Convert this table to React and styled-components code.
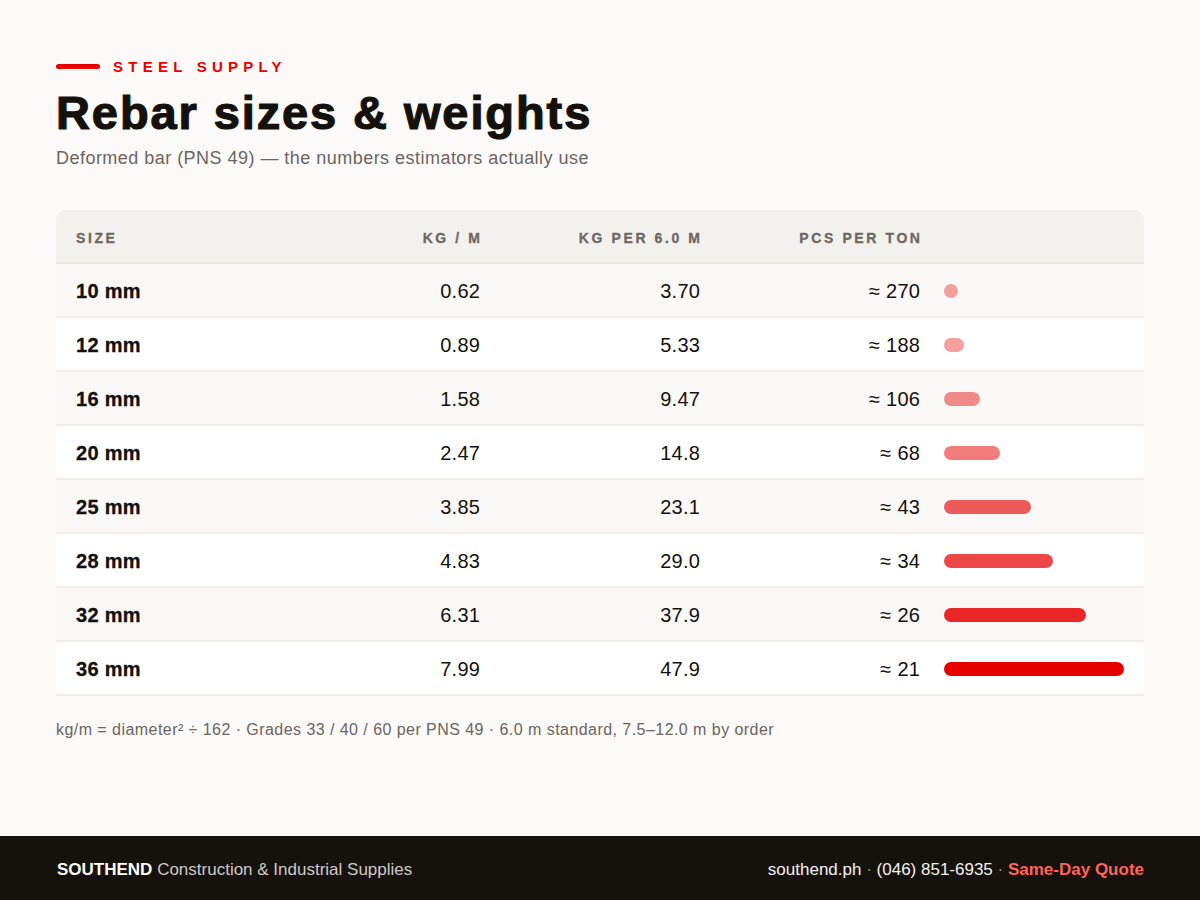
import React from "react";
import styled, { createGlobalStyle } from "styled-components";

const GlobalStyle = createGlobalStyle`
  html, body {
    margin: 0;
    padding: 0;
    background: #fbfaf8;
  }
  body {
    font-family: "Liberation Sans", Arial, sans-serif;
    color: #14110d;
  }
`;

const Page = styled.div`
  min-height: 100vh;
  display: flex;
  flex-direction: column;
  background: #fbfaf8;
`;

const Main = styled.main`
  flex: 1;
  padding: 56px 56px 0 56px;
`;

const Eyebrow = styled.div`
  display: flex;
  align-items: center;
  gap: 13px;
  height: 20px;
  color: #e60000;
  font-size: 15px;
  font-weight: 700;
  letter-spacing: 5.25px;
`;

const EyebrowLine = styled.span`
  width: 44px;
  height: 5px;
  border-radius: 3px;
  background: #e60000;
`;

const Title = styled.h1`
  margin: 10px 0 0 0;
  font-size: 47px;
  line-height: 54px;
  font-weight: 700;
  letter-spacing: 1.9px;
  color: #14110d;
  -webkit-text-stroke: 1.2px #14110d;
`;

const Subtitle = styled.p`
  margin: 6px 0 0 0;
  font-size: 18px;
  line-height: 24px;
  letter-spacing: 0.47px;
  color: #6b6561;
`;

const Table = styled.div`
  margin-top: 40px;
  display: flex;
  flex-direction: column;
`;

const Row = styled.div`
  display: grid;
  grid-template-columns: 1fr 200px 220px 220px 204px;
  align-items: center;
  height: 54px;
  box-sizing: border-box;
  padding: 3px 20px 0 20px;
  background: ${(p) => (p.$alt ? "#ffffff" : "#faf8f6")};
  border-bottom: 2px solid #f0ede9;
`;

const HeadRow = styled(Row)`
  background: #f3f1ed;
  border-radius: 10px 10px 0 0;
  border-bottom: 2px solid #ebe8e3;
`;

const HeadCell = styled.div`
  font-size: 14px;
  font-weight: 700;
  letter-spacing: 2.6px;
  color: #6e6762;
  text-align: ${(p) => (p.$right ? "right" : "left")};
  margin-right: ${(p) => (p.$right ? "-2.6px" : "0")};
  -webkit-text-stroke: 0.3px #6e6762;
`;

const SizeCell = styled.div`
  font-size: 20px;
  font-weight: 700;
  letter-spacing: 0.3px;
  color: #14110d;
  -webkit-text-stroke: 0.3px #14110d;
`;

const NumCell = styled.div`
  font-size: 20px;
  letter-spacing: 0.3px;
  margin-right: -0.3px;
  text-align: right;
  color: #14110d;
`;

const BarCell = styled.div`
  padding-left: 24px;
  display: flex;
  align-items: center;
  margin-top: -2px;
`;

const Bar = styled.div`
  height: 14px;
  min-width: 14px;
  border-radius: 7px;
  background: #e60000;
`;

const Note = styled.p`
  margin: 25px 0 0 0;
  font-size: 16px;
  letter-spacing: 0.45px;
  color: #6b6561;
`;

const Footer = styled.footer`
  height: 64px;
  box-sizing: border-box;
  background: #15110d;
  display: flex;
  align-items: center;
  justify-content: space-between;
  padding: 4px 56px 0 57px;
  font-size: 17px;
`;

const Brand = styled.div`
  color: #cfcac4;
  strong {
    color: #ffffff;
  }
`;

const Contact = styled.div`
  color: #f4f1ed;
  span {
    color: #9a948e;
  }
  strong {
    color: #ff645a;
  }
`;

const rows = [
  ["10 mm", "0.62", "3.70", "≈ 270"],
  ["12 mm", "0.89", "5.33", "≈ 188"],
  ["16 mm", "1.58", "9.47", "≈ 106"],
  ["20 mm", "2.47", "14.8", "≈ 68"],
  ["25 mm", "3.85", "23.1", "≈ 43"],
  ["28 mm", "4.83", "29.0", "≈ 34"],
  ["32 mm", "6.31", "37.9", "≈ 26"],
  ["36 mm", "7.99", "47.9", "≈ 21"],
];

const MAX = 7.99;

export default function App() {
  return (
    <Page>
      <GlobalStyle />
      <Main>
        <Eyebrow>
          <EyebrowLine />
          STEEL SUPPLY
        </Eyebrow>
        <Title>Rebar sizes &amp; weights</Title>
        <Subtitle>Deformed bar (PNS 49) — the numbers estimators actually use</Subtitle>

        <Table>
          <HeadRow>
            <HeadCell>SIZE</HeadCell>
            <HeadCell $right>KG / M</HeadCell>
            <HeadCell $right>KG PER 6.0 M</HeadCell>
            <HeadCell $right>PCS PER TON</HeadCell>
            <div />
          </HeadRow>
          {rows.map(([size, kgm, kg6, pcs], i) => {
            const t = parseFloat(kgm) / MAX;
            return (
              <Row key={size} $alt={i % 2 === 1}>
                <SizeCell>{size}</SizeCell>
                <NumCell>{kgm}</NumCell>
                <NumCell>{kg6}</NumCell>
                <NumCell>{pcs}</NumCell>
                <BarCell>
                  <Bar style={{ width: `${t * 100}%`, opacity: 0.3 + 0.7 * t }} />
                </BarCell>
              </Row>
            );
          })}
        </Table>

        <Note>
          kg/m = diameter² ÷ 162 · Grades 33 / 40 / 60 per PNS 49 · 6.0 m standard, 7.5–12.0 m by order
        </Note>
      </Main>
      <Footer>
        <Brand>
          <strong>SOUTHEND</strong> Construction &amp; Industrial Supplies
        </Brand>
        <Contact>
          southend.ph <span>·</span> (046) 851-6935 <span>·</span> <strong>Same-Day Quote</strong>
        </Contact>
      </Footer>
    </Page>
  );
}
